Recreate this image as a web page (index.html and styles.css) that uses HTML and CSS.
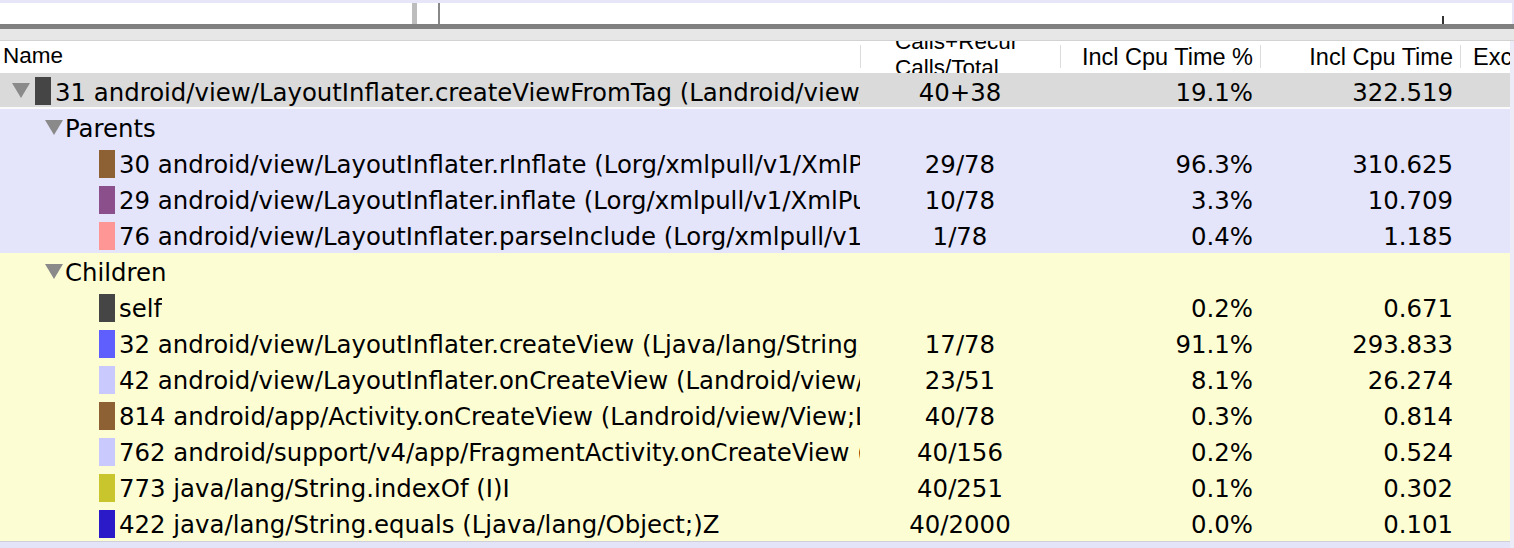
FILE: index.html
```html
<!DOCTYPE html>
<html>
<head>
<meta charset="utf-8">
<link rel="stylesheet" href="styles.css">
</head>
<body>
<div class="app">
  <div class="timeline">
    <div class="marker marker-light"></div>
    <div class="marker marker-dark"></div>
    <div class="tick"></div>
  </div>
  <div class="splitter"></div>
  <div class="toolbar"></div>
  <div class="table">
    <div class="row head">
      <div class="cell name">Name</div>
      <div class="cell calls"><div class="two-line">Calls+Recur<br>Calls/Total</div></div>
      <div class="cell num">Incl Cpu Time %</div>
      <div class="cell num">Incl Cpu Time</div>
      <div class="cell excl">Excl</div>
    </div>

    <div class="row sel">
      <div class="cell name lvl0"><svg class="tri" viewBox="0 0 18 15"><polygon points="0,0 18,0 9,15"/></svg><span class="sw" style="background:#454545"></span><span class="lbl">31 android/view/LayoutInflater.createViewFromTag (Landroid/view/View;Ljava/lang/String;Landroid/util/AttributeSet;)Landroid/view/View;</span></div>
      <div class="cell calls">40+38</div>
      <div class="cell num">19.1%</div>
      <div class="cell num">322.519</div>
      <div class="cell excl"></div>
    </div>

    <div class="group parents">
      <div class="row">
        <div class="cell name lvl1"><svg class="tri" viewBox="0 0 18 15"><polygon points="0,0 18,0 9,15"/></svg><span class="lbl">Parents</span></div>
        <div class="cell calls"></div><div class="cell num"></div><div class="cell num"></div><div class="cell excl"></div>
      </div>
      <div class="row">
        <div class="cell name lvl2"><span class="sw" style="background:#8e6134"></span><span class="lbl">30 android/view/LayoutInflater.rInflate (Lorg/xmlpull/v1/XmlPullParser;Landroid/view/View;)V</span></div>
        <div class="cell calls">29/78</div><div class="cell num">96.3%</div><div class="cell num">310.625</div><div class="cell excl"></div>
      </div>
      <div class="row">
        <div class="cell name lvl2"><span class="sw" style="background:#8b4f8b"></span><span class="lbl">29 android/view/LayoutInflater.inflate (Lorg/xmlpull/v1/XmlPullParser;Landroid/view/ViewGroup;Z)Landroid/view/View;</span></div>
        <div class="cell calls">10/78</div><div class="cell num">3.3%</div><div class="cell num">10.709</div><div class="cell excl"></div>
      </div>
      <div class="row">
        <div class="cell name lvl2"><span class="sw" style="background:#ff9696"></span><span class="lbl">76 android/view/LayoutInflater.parseInclude (Lorg/xmlpull/v1/XmlPullParser;Landroid/view/View;)V</span></div>
        <div class="cell calls">1/78</div><div class="cell num">0.4%</div><div class="cell num">1.185</div><div class="cell excl"></div>
      </div>
    </div>

    <div class="group children">
      <div class="row">
        <div class="cell name lvl1"><svg class="tri" viewBox="0 0 18 15"><polygon points="0,0 18,0 9,15"/></svg><span class="lbl">Children</span></div>
        <div class="cell calls"></div><div class="cell num"></div><div class="cell num"></div><div class="cell excl"></div>
      </div>
      <div class="row">
        <div class="cell name lvl2"><span class="sw" style="background:#454545"></span><span class="lbl">self</span></div>
        <div class="cell calls"></div><div class="cell num">0.2%</div><div class="cell num">0.671</div><div class="cell excl"></div>
      </div>
      <div class="row">
        <div class="cell name lvl2"><span class="sw" style="background:#5f5ffd"></span><span class="lbl">32 android/view/LayoutInflater.createView (Ljava/lang/String;Ljava/lang/String;Landroid/util/AttributeSet;)Landroid/view/View;</span></div>
        <div class="cell calls">17/78</div><div class="cell num">91.1%</div><div class="cell num">293.833</div><div class="cell excl"></div>
      </div>
      <div class="row">
        <div class="cell name lvl2"><span class="sw" style="background:#c9c9fd"></span><span class="lbl">42 android/view/LayoutInflater.onCreateView (Landroid/view/View;Ljava/lang/String;Landroid/util/AttributeSet;)Landroid/view/View;</span></div>
        <div class="cell calls">23/51</div><div class="cell num">8.1%</div><div class="cell num">26.274</div><div class="cell excl"></div>
      </div>
      <div class="row">
        <div class="cell name lvl2"><span class="sw" style="background:#8e6134"></span><span class="lbl">814 android/app/Activity.onCreateView (Landroid/view/View;Ljava/lang/String;Landroid/content/Context;)Landroid/view/View;</span></div>
        <div class="cell calls">40/78</div><div class="cell num">0.3%</div><div class="cell num">0.814</div><div class="cell excl"></div>
      </div>
      <div class="row">
        <div class="cell name lvl2"><span class="sw" style="background:#c9c9fd"></span><span class="lbl">762 android/support/v4/app/FragmentActivity.onCreateView (Landroid/view/View;Ljava/lang/String;)Landroid/view/View;</span></div>
        <div class="cell calls">40/156</div><div class="cell num">0.2%</div><div class="cell num">0.524</div><div class="cell excl"></div>
      </div>
      <div class="row">
        <div class="cell name lvl2"><span class="sw" style="background:#c9c52c"></span><span class="lbl">773 java/lang/String.indexOf (I)I</span></div>
        <div class="cell calls">40/251</div><div class="cell num">0.1%</div><div class="cell num">0.302</div><div class="cell excl"></div>
      </div>
      <div class="row">
        <div class="cell name lvl2"><span class="sw" style="background:#2b1ac8"></span><span class="lbl">422 java/lang/String.equals (Ljava/lang/Object;)Z</span></div>
        <div class="cell calls">40/2000</div><div class="cell num">0.0%</div><div class="cell num">0.101</div><div class="cell excl"></div>
      </div>
    </div>
    <div class="tail"></div>
  </div>
</div>
</body>
</html>
```

FILE: styles.css
```css
html, body {
  margin: 0;
  padding: 0;
  background: #ffffff;
  overflow: hidden;
}

.app {
  width: 1514px;
  height: 548px;
  display: flex;
  flex-direction: column;
  font-family: "DejaVu Sans", "Liberation Sans", sans-serif;
  color: #000;
  overflow: hidden;
}

.timeline {
  position: relative;
  height: 21px;
  flex: none;
  background: #fff;
  border-top: 3px solid #e6e6f8;
  border-right: 2px solid #e6e6f6;
}

.marker {
  position: absolute;
  top: 0;
  bottom: 0;
}

.marker-light {
  left: 412px;
  width: 5px;
  background: #bdbdbd;
}

.marker-dark {
  left: 438px;
  width: 2px;
  background: #888;
}

.tick {
  position: absolute;
  left: 1442px;
  top: 13px;
  bottom: 0;
  width: 2px;
  background: #333;
}

.splitter {
  height: 5px;
  flex: none;
  background: #808080;
}

.toolbar {
  height: 11px;
  flex: none;
  background: #e7e7e7;
  border-bottom: 1px solid #d2d2d2;
}

.table {
  flex: 1;
  display: flex;
  flex-direction: column;
  border-right: 4px solid #ececf8;
  overflow: hidden;
}

.row {
  display: grid;
  grid-template-columns: 860px 200px 200px 200px 1fr;
  height: 36px;
  font-size: 24.4px;
  line-height: 32px;
  padding-top: 4px;
  box-sizing: border-box;
}

.cell {
  position: relative;
  overflow: hidden;
  white-space: nowrap;
}

.head {
  height: 32px;
  padding-top: 0;
  line-height: 33px;
  font-family: "Liberation Sans", Arial, sans-serif;
  font-size: 22.5px;
  background: #fff;
}

.head .num,
.head .excl {
  font-size: 23.5px;
}

.head .cell + .cell::before {
  content: "";
  position: absolute;
  left: 0;
  top: 4px;
  height: 23px;
  width: 1px;
  background: #dcdcdc;
}

.head .name {
  padding-left: 3px;
}

.head .calls {
  text-align: left;
  padding-left: 35px;
}

.two-line {
  line-height: 26px;
  margin-top: -12px;
}

.calls {
  text-align: center;
}

.num {
  text-align: right;
  padding-right: 7px;
}

.excl {
  padding-left: 13px;
}

.sel {
  background: #dadada;
  height: 36px;
  padding-top: 4px;
  line-height: 31px;
  border-bottom: 2px solid #fafafa;
}

.parents {
  background: #e4e4fa;
}

.children {
  background: #fdfdd4;
}

.name {
  display: flex;
  align-items: center;
  margin-top: -4px;
}

.lbl {
  overflow: hidden;
  white-space: nowrap;
  padding-top: 4px;
}

.tri {
  flex: none;
  width: 18px;
  height: 15px;
  fill: #8a8a8a;
}

.sw {
  flex: none;
  width: 16px;
  height: 28px;
  margin-right: 4px;
  margin-top: 1px;
}

.lvl0 {
  padding-left: 12px;
}

.lvl0 .tri {
  margin-right: 5px;
}

.lvl1 {
  padding-left: 45px;
}

.lvl1 .tri {
  margin-right: 2px;
}

.lvl2 {
  padding-left: 99px;
}

.tail {
  flex: 1;
  background: #e4e4f8;
  border-top: 1px solid #cfcfdc;
}
```
